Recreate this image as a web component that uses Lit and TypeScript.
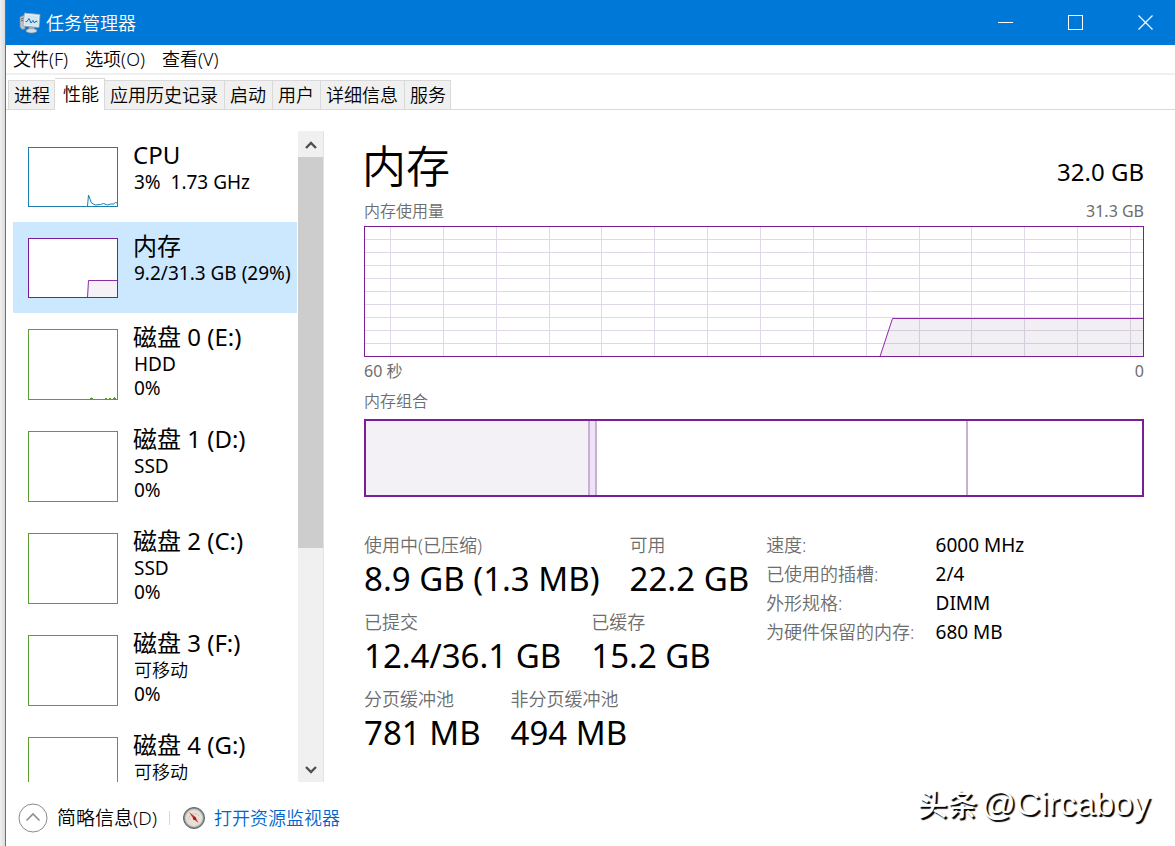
import { LitElement, html, css, svg, nothing } from "lit";
import { customElement, property, state } from "lit/decorators.js";
import { classMap } from "lit/directives/class-map.js";

type Kind = "cpu" | "memory" | "disk";

interface Resource {
  name: string;
  lines: string[];
  kind: Kind;
  activity?: boolean;
}

const RESOURCES: Resource[] = [
  { name: "CPU", lines: ["3%  1.73 GHz"], kind: "cpu" },
  { name: "内存", lines: ["9.2/31.3 GB (29%)"], kind: "memory" },
  { name: "磁盘 0 (E:)", lines: ["HDD", "0%"], kind: "disk", activity: true },
  { name: "磁盘 1 (D:)", lines: ["SSD", "0%"], kind: "disk" },
  { name: "磁盘 2 (C:)", lines: ["SSD", "0%"], kind: "disk" },
  { name: "磁盘 3 (F:)", lines: ["可移动", "0%"], kind: "disk" },
  { name: "磁盘 4 (G:)", lines: ["可移动"], kind: "disk" },
];

const MENUS = ["文件(F)", "选项(O)", "查看(V)"];
const TABS = ["进程", "性能", "应用历史记录", "启动", "用户", "详细信息", "服务"];

const STATS = [
  [["使用中(已压缩)", "8.9 GB (1.3 MB)"], ["可用", "22.2 GB"]],
  [["已提交", "12.4/36.1 GB"], ["已缓存", "15.2 GB"]],
  [["分页缓冲池", "781 MB"], ["非分页缓冲池", "494 MB"]],
];

const HARDWARE = [
  ["速度:", "6000 MHz"],
  ["已使用的插槽:", "2/4"],
  ["外形规格:", "DIMM"],
  ["为硬件保留的内存:", "680 MB"],
];

@customElement("title-bar")
export class TitleBar extends LitElement {
  static styles = css`
    :host { display: flex; height: 45px; align-items: center; background: #0078d7; color: #fff; padding-left: 13px; }
    .logo { width: 22px; height: 22px; margin-right: 5px; }
    .caption { flex: 1; margin: 0; font-size: 18px; font-weight: 350; line-height: 22px; }
    .controls { display: flex; gap: 10px; }
    .control { width: 60px; height: 45px; padding: 0; border: 0; background: none; color: inherit; display: grid; place-items: center; }
  `;
  render() {
    return html`
      <svg class="logo" viewBox="0 0 22 22" aria-hidden="true">
        <path d="M1 5l5-2v14l-3 .5L1 15z" fill="#b9c2c9" stroke="#7c8a96" stroke-width=".6" />
        <path d="M2 7l3-1M2 9l3-1" stroke="#5f6d78" />
        <path d="M5.500 1 21 2.500 20 15.500 4 14z" fill="#e9eef2" stroke="#96a5b1" stroke-width=".8" />
        <path d="M7 2.800 19.300 4 18.500 13.800 5.800 12.600z" fill="#cfe6f5" />
        <path d="M6.500 9.500h1.500l2-3 2 4.500 2-2.500 1.500 2.500 1.500-2 1.500 1" fill="none" stroke="#1c6ca8" />
        <path d="M10 15h5l.8 3H9z" fill="#9facb6" />
        <ellipse cx="12.500" cy="18.800" rx="5.500" ry="2.200" fill="#d5dbe0" stroke="#8996a1" stroke-width=".6" />
      </svg>
      <h1 class="caption">任务管理器</h1>
      <div class="controls">
        <button class="control" aria-label="最小化">
          <svg width="15" height="15"><path d="M0 7.500h15" stroke="#fff" /></svg>
        </button>
        <button class="control" aria-label="最大化">
          <svg width="15" height="15"><rect x=".5" y=".5" width="14" height="14" fill="none" stroke="#fff" /></svg>
        </button>
        <button class="control" aria-label="关闭">
          <svg width="15" height="15"><path d="M.5.5l14 14M14.500.5l-14 14" stroke="#fff" stroke-width="1.200" /></svg>
        </button>
      </div>
    `;
  }
}

@customElement("resource-item")
export class ResourceItem extends LitElement {
  @property({ attribute: false }) item!: Resource;
  @property({ type: Boolean }) selected = false;

  static styles = css`
    :host { display: block; }
    .row { display: flex; align-items: flex-start; gap: 15px; width: 100%; padding: 16px 0 15px 15px; border: 0; background: none; font: inherit; color: #000; text-align: left; }
    .selected { background: #cce8ff; }
    .thumb { flex: none; width: 90px; height: 60px; background: #fff; }
    .tall { height: 71px; }
    .text { display: flex; flex-direction: column; margin-top: -8px; margin-bottom: -8px; white-space: pre; }
    .name { font-size: 24px; line-height: 31px; }
    .line { font-size: 19px; line-height: 24px; padding-left: 1px; }
    .cjk { font-size: 18px; font-weight: 350; }
  `;

  private plot() {
    const { kind, activity } = this.item;
    if (kind === "cpu") {
      return svg`
        <path d="M59.500 59l1-11 3 8 4 2 5-.5 3-1 4 1.500 3-1h3l2-1.500 2 .5 2 2" fill="none" stroke="#1a7fae" />
        <rect x=".5" y=".5" width="89" height="59" fill="none" stroke="#1a7fae" />`;
    }
    if (kind === "memory") {
      return svg`
        <path d="M59.500 59.500l1-17h29v17z" fill="#f4f2f7" stroke="#8b2ba8" />
        <rect x=".5" y=".5" width="89" height="59" fill="none" stroke="#7b1d99" />`;
    }
    return svg`
      ${activity ? svg`<path d="M62 69.500h3M77 69.500h2M81 69.500h2M85 69.500h3M63.500 68.500v1M86.500 68v1" stroke="#4f9a22" />` : nothing}
      <rect x=".5" y=".5" width="89" height="70" fill="none" stroke="#5a9e2f" />`;
  }

  render() {
    const { name, lines, kind } = this.item;
    return html`
      <button class=${classMap({ row: true, selected: this.selected })}>
        <svg class=${classMap({ thumb: true, tall: kind === "disk" })} aria-hidden="true">${this.plot()}</svg>
        <span class="text">
          <span class="name">${name}</span>
          ${lines.map((l) => html`<span class=${classMap({ line: true, cjk: /[\u4e00-\u9fff]/.test(l) })}>${l}</span>`)}
        </span>
      </button>
    `;
  }
}

@customElement("memory-panel")
export class MemoryPanel extends LitElement {
  static styles = css`
    :host { display: block; }
    .head { display: flex; justify-content: space-between; align-items: flex-end; }
    .title { margin: 0 0 0 -2px; font-size: 44px; line-height: 66px; font-weight: 350; }
    .total { font-size: 24px; line-height: 54px; }
    .caption { display: flex; justify-content: space-between; font-size: 16px; line-height: 24px; color: #6d6d6d; font-weight: 350; }
    .number { font-weight: 400; }
    .chart { display: block; width: 100%; height: 131px; margin: 3px 0 2px; }
    .composition { display: block; width: 100%; height: 78px; margin-top: 6px; }
    .below { margin-top: 6px; }
    .details { display: flex; gap: 17px; margin-top: 36px; }
    .stats { display: flex; flex-direction: column; gap: 10px; }
    .pair { display: flex; gap: 30px; }
    .stat, .hardware { margin: 0; }
    .label { font-size: 18px; line-height: 25px; color: #6d6d6d; font-weight: 350; white-space: nowrap; }
    .value { margin: 0; font-size: 33px; line-height: 42px; white-space: nowrap; }
    .hardware { display: grid; grid-template-columns: auto auto; column-gap: 21px; align-content: start; margin-top: -2px; }
    .hardware .label, .fact { line-height: 29px; }
    .fact { margin: 0; font-size: 19px; white-space: nowrap; }
  `;

  private grid() {
    const columns = Array.from({ length: 15 }, (_, i) => Math.round(26 + i * 52.85) + 0.5);
    const rows = Array.from({ length: 9 }, (_, i) => 13 * (i + 1) + 0.5);
    return svg`
      ${columns.map((x) => svg`<path d="M${x} 1V130" stroke="#e0d8e6" />`)}
      ${rows.map((y) => svg`<path d="M1 ${y}H779" stroke="#e0d8e6" />`)}`;
  }

  render() {
    return html`
      <div class="head"><h2 class="title">内存</h2><span class="total">32.0 GB</span></div>
      <div class="caption"><span>内存使用量</span><span class="number">31.3 GB</span></div>
      <svg class="chart" viewBox="0 0 780 131" preserveAspectRatio="none" role="img" aria-label="内存使用量">
        ${this.grid()}
        <path d="M516 130.500L528.500 92.500H779.500V130.500z" fill="#7a6485" fill-opacity=".1" />
        <path d="M516 130.500L528.500 92.500H779.500" fill="none" stroke="#8b2ba8" />
        <rect x=".5" y=".5" width="779" height="130" fill="none" stroke="#7b1d99" />
      </svg>
      <div class="caption"><span class="number">60 秒</span><span class="number">0</span></div>
      <div class="caption below"><span>内存组合</span></div>
      <svg class="composition" viewBox="0 0 780 78" preserveAspectRatio="none" role="img" aria-label="内存组合">
        <rect x="1" y="1" width="224" height="76" fill="#f3f1f5" />
        <rect x="225" y="1" width="7" height="76" fill="#f0e2f6" />
        <path d="M225 1V77M232 1V77M603 1V77" stroke="#c5b1d0" stroke-width="2" />
        <rect x="1" y="1" width="778" height="76" fill="none" stroke="#7b1d99" stroke-width="2" />
      </svg>
      <div class="details">
        <div class="stats">
          ${STATS.map((row) => html`<div class="pair">${row.map(([label, value]) => html`
            <dl class="stat"><dt class="label">${label}</dt><dd class="value">${value}</dd></dl>`)}</div>`)}
        </div>
        <dl class="hardware">
          ${HARDWARE.map(([label, value]) => html`<dt class="label">${label}</dt><dd class="fact">${value}</dd>`)}
        </dl>
      </div>
    `;
  }
}

@customElement("app-root")
export class AppRoot extends LitElement {
  @state() private tab = 1;
  @state() private selected = 1;

  static styles = css`
    :host { display: flex; height: 100vh; box-sizing: border-box; background: linear-gradient(90deg, #f0f0f0, #dcdcdc 5px); padding-left: 5px; font-family: "Noto Sans", "Noto Sans CJK SC", sans-serif; color: #000; overflow: hidden; }
    .window { flex: 1; min-width: 0; display: flex; flex-direction: column; background: #fff; border-left: 1px solid #2a7fc9; }
    .menu { display: flex; gap: 17px; height: 28px; padding-left: 7px; border-bottom: 2px solid #f0f0f0; }
    .menu-item { padding: 0; border: 0; background: none; font: inherit; font-size: 18px; font-weight: 350; line-height: 28px; color: #000; }
    .tabs { display: flex; align-items: flex-end; height: 34px; padding-left: 2px; border-bottom: 1px solid #d9d9d9; }
    .tab { height: 29px; padding: 0 6px 0 5px; border: 1px solid #d9d9d9; border-width: 1px 1px 0 0; background: #f0f0f0; font: inherit; font-size: 18px; font-weight: 350; line-height: 28px; color: #000; }
    .tab:first-child { border-left-width: 1px; }
    .tab:first-child, .tab:last-child { padding: 0 4px 0 5px; }
    .tab.active { height: 32px; margin-bottom: -1px; padding: 0 5px 2px 8px; background: #fff; }
    .body { flex: 1; min-height: 0; display: flex; padding-top: 21px; }
    .list { width: 284px; flex: none; margin: 0 1px 0 7px; padding: 0; overflow: hidden; list-style: none; }
    .scroll { flex: none; width: 25px; display: flex; flex-direction: column; background: #f0f0f0; border-right: 1px solid #e2e2e2; }
    .arrow { height: 26px; padding: 2px 0 0; border: 0; background: none; display: grid; place-items: center; }
    .track { flex: 1; }
    .grip { height: 65.3%; background: #cdcdcd; }
    .panel { flex: 1; min-width: 0; padding: 2px 31px 0 40px; }
    .footer { display: flex; align-items: center; height: 64px; padding: 0 25px 0 12px; }
    .fewer { display: flex; align-items: center; gap: 9px; padding: 8px 0 0; border: 0; background: none; font: inherit; font-size: 19px; font-weight: 350; line-height: 28px; color: #000; }
    .divider { width: 1px; height: 14px; margin: 8px 12px 0; background: #d8d8d8; }
    .monitor { display: flex; align-items: center; gap: 8px; padding-top: 8px; font-size: 18px; font-weight: 350; line-height: 28px; color: #0066cc; text-decoration: none; }
    .mark { display: flex; align-items: baseline; gap: 4px; margin: 0 0 22px auto; font-size: 30px; line-height: 40px; font-weight: 500; color: #fff; text-shadow: 2px 2px 1px #000; }
    .handle { font-family: "Liberation Sans", sans-serif; font-size: 34px; font-weight: 400; }
  `;

  render() {
    return html`
      <div class="window">
        <title-bar></title-bar>
        <nav class="menu">${MENUS.map((m) => html`<button class="menu-item">${m}</button>`)}</nav>
        <div class="tabs" role="tablist">
          ${TABS.map((t, i) => html`<button role="tab" aria-selected=${i === this.tab}
            class=${classMap({ tab: true, active: i === this.tab })} @click=${() => (this.tab = i)}>${t}</button>`)}
        </div>
        <div class="body">
          <ul class="list">
            ${RESOURCES.map((r, i) => html`<li><resource-item .item=${r} ?selected=${i === this.selected}
              @click=${() => (this.selected = i)}></resource-item></li>`)}
          </ul>
          <div class="scroll">
            <button class="arrow" aria-label="向上滚动">
              <svg width="12" height="10"><path d="M1 8l5-5 5 5" fill="none" stroke="#505050" stroke-width="2.400" /></svg>
            </button>
            <div class="track"><div class="grip"></div></div>
            <button class="arrow" aria-label="向下滚动">
              <svg width="12" height="10"><path d="M1 2l5 5 5-5" fill="none" stroke="#505050" stroke-width="2.400" /></svg>
            </button>
          </div>
          <memory-panel class="panel"></memory-panel>
        </div>
        <footer class="footer">
          <button class="fewer">
            <svg width="30" height="30" aria-hidden="true">
              <circle cx="15" cy="15" r="14" fill="none" stroke="#8a8a8a" />
              <path d="M8.500 17.500l6.500-6.500 6.500 6.500" fill="none" stroke="#8f8f8f" stroke-width="1.600" />
            </svg>
            <span>简略信息(D)</span>
          </button>
          <span class="divider"></span>
          <a class="monitor" href="#monitor">
            <svg width="24" height="24" aria-hidden="true">
              <circle cx="12" cy="12" r="10.500" fill="#8f9694" stroke="#5d6462" />
              <circle cx="12" cy="12" r="8.500" fill="#e9dfd6" stroke="#c9cfcd" />
              <path d="M6.500 13.500a6 6 0 0 1 11-3" fill="none" stroke="#b5a394" stroke-dasharray="1 1.500" />
              <path d="M7 6l6.500 5 3 6-5-4z" fill="#c9302c" />
              <circle cx="12.500" cy="12.500" r="1.500" fill="#7c2a26" />
            </svg>
            <span>打开资源监视器</span>
          </a>
          <div class="mark"><span>头条</span><span class="handle">@Circaboy</span></div>
        </footer>
      </div>
    `;
  }
}
